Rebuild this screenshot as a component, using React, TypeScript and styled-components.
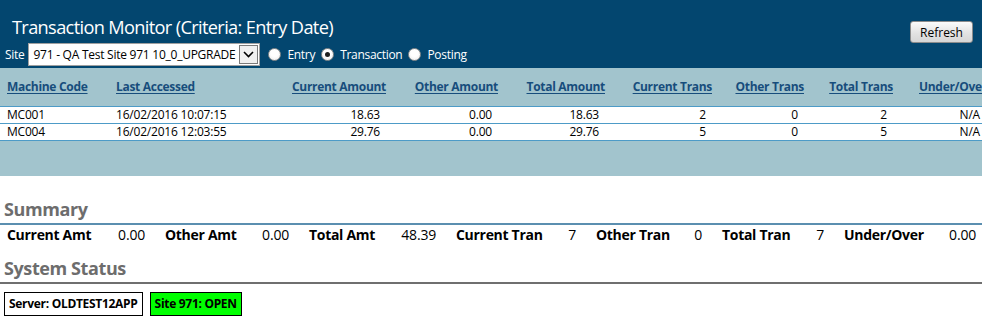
import React from 'react'
import styled, { createGlobalStyle } from 'styled-components'

const GlobalStyle = createGlobalStyle`
  html, body {
    margin: 0;
    padding: 0;
    background: #ffffff;
    overflow: hidden;
  }
  body {
    font-family: 'Open Sans', 'Noto Sans', sans-serif;
    color: #000000;
  }
`

const Page = styled.div`
  width: 982px;
  overflow: hidden;
`

const Header = styled.div`
  background: #03466f;
  height: 68px;
  box-sizing: border-box;
  padding: 14px 9px 0 0;
  display: flex;
  justify-content: space-between;
  align-items: flex-start;
`

const HeaderLeft = styled.div`
  display: flex;
  flex-direction: column;
`

const Title = styled.h1`
  margin: 0 0 0 12px;
  font-size: 18.2px;
  line-height: 26px;
  font-weight: 400;
  color: #ffffff;
  letter-spacing: -0.65px;
`

const SiteRow = styled.div`
  margin-top: 3px;
  padding-left: 5px;
  display: flex;
  align-items: center;
  height: 23px;
  font-size: 12px;
  color: #ffffff;
  letter-spacing: -0.3px;
`

const SiteLabel = styled.span`
  margin-right: 4px;
`

const SelectBox = styled.div`
  width: 232px;
  height: 23px;
  box-sizing: border-box;
  background: #ffffff;
  border: 1px solid #a0a0a0;
  display: flex;
  align-items: center;
  padding-left: 4px;
  color: #000000;
  margin-right: 8px;
  letter-spacing: -0.25px;
`

const SelectText = styled.span`
  flex: 1;
  overflow: hidden;
  white-space: nowrap;
`

const SelectArrow = styled.span`
  width: 19px;
  height: 19px;
  margin-right: 1px;
  box-sizing: border-box;
  border: 1px solid #7a7a7a;
  background: #f0f0f0;
  display: flex;
  align-items: center;
  justify-content: center;
`

const Radio = styled.span<{ $checked?: boolean }>`
  width: 13px;
  height: 13px;
  box-sizing: border-box;
  border-radius: 50%;
  border: 1px solid #8e8f8f;
  background: radial-gradient(circle at 50% 40%, #ffffff 40%, #e6e6e6 100%);
  display: inline-flex;
  align-items: center;
  justify-content: center;
  margin-right: 6px;

  &::after {
    content: '';
    display: ${(p) => (p.$checked ? 'block' : 'none')};
    width: 5px;
    height: 5px;
    border-radius: 50%;
    background: #1f1f1f;
  }
`

const RadioLabel = styled.span`
  margin-right: 6px;
`

const RefreshButton = styled.button`
  margin-top: 7px;
  width: 63px;
  height: 22px;
  border: 1px solid #8c8c8c;
  border-radius: 3px;
  background: linear-gradient(#fbfbfb, #e3e3e3 55%, #d6d6d6);
  font-family: inherit;
  font-size: 12px;
  color: #000000;
  padding: 0;
`

const Grid = styled.div`
  background: #a2c4cd;
  padding-bottom: 35px;
  overflow: hidden;
`

const Table = styled.table`
  width: 991px;
  table-layout: fixed;
  border-collapse: collapse;
  font-size: 12px;
`

const Th = styled.th<{ $w: number; $align?: 'left' | 'right'; $pl?: number }>`
  width: ${(p) => p.$w}px;
  height: 38px;
  padding: 0 4px 0 ${(p) => p.$pl ?? 4}px;
  box-sizing: border-box;
  text-align: ${(p) => p.$align ?? 'right'};
  white-space: nowrap;
  overflow: visible;
  border-bottom: 1px solid #4d9bc7;
`

const HeadLink = styled.a`
  color: #174d7c;
  font-weight: 700;
  font-size: 12px;
  letter-spacing: -0.3px;
  text-decoration: underline;
  text-underline-offset: 2px;
`

const Tr = styled.tr`
  background: #ffffff;
`

const Td = styled.td<{ $align?: 'left' | 'right'; $pl?: number; $pr?: number }>`
  height: 16px;
  padding: 0 ${(p) => p.$pr ?? 10}px 0 ${(p) => p.$pl ?? 4}px;
  box-sizing: border-box;
  line-height: 16px;
  text-align: ${(p) => p.$align ?? 'right'};
  white-space: nowrap;
  border-bottom: 1px solid #4d9bc7;
  letter-spacing: -0.2px;
`

const SectionTitle = styled.h2<{ $line: string; $top: number }>`
  margin: ${(p) => p.$top}px 0 0;
  padding: 0 0 3px 4px;
  font-size: 18px;
  line-height: 22px;
  font-weight: 700;
  color: #6d6d6d;
  letter-spacing: -0.4px;
  border-bottom: 2px solid ${(p) => p.$line};
`

const SummaryRow = styled.div`
  display: flex;
  gap: 20px;
  padding-left: 7px;
  line-height: 20px;
  font-size: 14px;
`

const SummaryItem = styled.div<{ $w: number }>`
  width: ${(p) => p.$w}px;
  display: flex;
  justify-content: space-between;
  white-space: nowrap;
`

const SummaryLabel = styled.span`
  font-weight: 700;
  letter-spacing: -0.3px;
`

const SummaryValue = styled.span`
  letter-spacing: -0.2px;
`

const StatusRow = styled.div`
  display: flex;
  gap: 7px;
  margin: 8px 0 0 4px;
`

const StatusBox = styled.div<{ $bg: string }>`
  height: 24px;
  box-sizing: border-box;
  border: 1px solid #000000;
  background: ${(p) => p.$bg};
  padding: 0 4px;
  display: flex;
  align-items: center;
  font-size: 12px;
  font-weight: 700;
  letter-spacing: -0.3px;
`

const columns = [
  { title: 'Machine Code', w: 112, align: 'left' as const, pl: 7 },
  { title: 'Last Accessed', w: 168, align: 'left' as const, pl: 4 },
  { title: 'Current Amount', w: 110 },
  { title: 'Other Amount', w: 112 },
  { title: 'Total Amount', w: 107 },
  { title: 'Current Trans', w: 107 },
  { title: 'Other Trans', w: 92 },
  { title: 'Total Trans', w: 89 },
  { title: 'Under/Over', w: 94, align: 'left' as const, pl: 22 },
]

const rows = [
  ['MC001', '16/02/2016 10:07:15', '18.63', '0.00', '18.63', '2', '0', '2', 'N/A'],
  ['MC004', '16/02/2016 12:03:55', '29.76', '0.00', '29.76', '5', '0', '5', 'N/A'],
]

const summary = [
  { label: 'Current Amt', value: '0.00', w: 138 },
  { label: 'Other Amt', value: '0.00', w: 124 },
  { label: 'Total Amt', value: '48.39', w: 127 },
  { label: 'Current Tran', value: '7', w: 120 },
  { label: 'Other Tran', value: '0', w: 106 },
  { label: 'Total Tran', value: '7', w: 102 },
  { label: 'Under/Over', value: '0.00', w: 132 },
]

const App = () => (
  <Page>
    <GlobalStyle />
    <Header>
      <HeaderLeft>
        <Title>Transaction Monitor (Criteria: Entry Date)</Title>
        <SiteRow>
          <SiteLabel>Site</SiteLabel>
          <SelectBox>
            <SelectText>971 - QA Test Site 971 10_0_UPGRADE</SelectText>
            <SelectArrow>
              <svg width="11" height="7" viewBox="0 0 11 7">
                <path d="M1 1 L5.5 5.5 L10 1" fill="none" stroke="#000" strokeWidth="1.6" />
              </svg>
            </SelectArrow>
          </SelectBox>
          <Radio />
          <RadioLabel>Entry</RadioLabel>
          <Radio $checked />
          <RadioLabel>Transaction</RadioLabel>
          <Radio />
          <RadioLabel>Posting</RadioLabel>
        </SiteRow>
      </HeaderLeft>
      <RefreshButton>Refresh</RefreshButton>
    </Header>

    <Grid>
      <Table>
        <thead>
          <tr>
            {columns.map((c) => (
              <Th key={c.title} $w={c.w} $align={c.align} $pl={c.pl}>
                <HeadLink href="#">{c.title}</HeadLink>
              </Th>
            ))}
          </tr>
        </thead>
        <tbody>
          {rows.map((r) => (
            <Tr key={r[0]}>
              {r.map((v, i) => (
                <Td
                  key={i}
                  $align={i < 2 ? 'left' : 'right'}
                  $pl={i === 0 ? 7 : 4}
                  $pr={i === 8 ? 11 : 10}
                >
                  {v}
                </Td>
              ))}
            </Tr>
          ))}
        </tbody>
      </Table>
    </Grid>

    <SectionTitle $line="#5b8fb0" $top={22}>Summary</SectionTitle>
    <SummaryRow>
      {summary.map((s) => (
        <SummaryItem key={s.label} $w={s.w}>
          <SummaryLabel>{s.label}</SummaryLabel>
          <SummaryValue>{s.value}</SummaryValue>
        </SummaryItem>
      ))}
    </SummaryRow>

    <SectionTitle $line="#6f6f6f" $top={12}>System Status</SectionTitle>
    <StatusRow>
      <StatusBox $bg="#ffffff">Server: OLDTEST12APP</StatusBox>
      <StatusBox $bg="#00ff00">Site 971: OPEN</StatusBox>
    </StatusRow>
  </Page>
)

export default App
